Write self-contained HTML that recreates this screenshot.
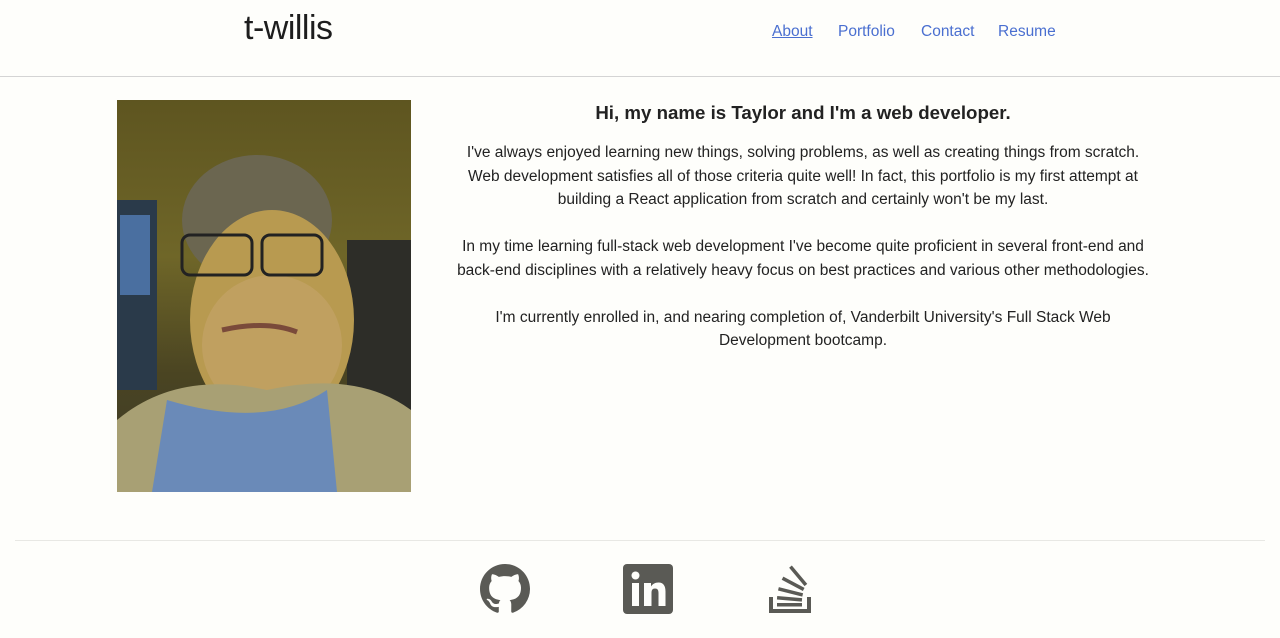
<!DOCTYPE html>
<html><head><meta charset="utf-8"><style>
*{margin:0;padding:0;box-sizing:border-box}
body{width:1280px;height:638px;background:#fefefb;font-family:"Liberation Sans",sans-serif;position:relative;overflow:hidden;color:#222}
.logo{position:absolute;left:244px;top:9px;font-size:34px;color:#1d1d1d;letter-spacing:-0.5px}
nav a{position:absolute;top:23px;font-size:15.5px;color:#4a6fd0;text-decoration:none}
.hr1{position:absolute;left:0;top:76px;width:1280px;border-top:1px solid #d4d4d4}
.hr2{position:absolute;left:15px;top:540px;width:1250px;border-top:1px solid #e8e8e4}
.photo{position:absolute;left:117px;top:100px;width:294px;height:392px;overflow:hidden;background:linear-gradient(180deg,#5e5520 0%,#6f6628 40%,#4a4422 70%,#3b3a2a 100%)}
h1{position:absolute;left:440px;width:726px;top:102px;text-align:center;font-size:18.7px;font-weight:bold;color:#222}
.txt{position:absolute;left:440px;width:726px;top:141px;text-align:center;font-size:15.5px;line-height:23.5px;white-space:nowrap;color:#222}
.txt p{margin-bottom:23.5px}
</style></head><body>
<div class="logo">t-willis</div>
<nav><a style="left:772px;text-decoration:underline">About</a><a style="left:838px">Portfolio</a><a style="left:921px">Contact</a><a style="left:998px">Resume</a></nav>
<div class="hr1"></div>
<div class="photo">
<svg width="294" height="392" viewBox="0 0 294 392">
<rect x="0" y="100" width="40" height="190" fill="#2a3a4a"/>
<rect x="3" y="115" width="30" height="80" fill="#4a6fa0"/>
<rect x="230" y="140" width="64" height="180" fill="#2d2d28"/>
<ellipse cx="140" cy="120" rx="75" ry="65" fill="#6b6650"/>
<ellipse cx="155" cy="220" rx="82" ry="110" fill="#b89a50"/>
<ellipse cx="155" cy="245" rx="70" ry="70" fill="#c0a060"/>
<path d="M0 320 Q60 270 150 290 Q240 270 294 310 L294 392 L0 392Z" fill="#a8a074"/>
<path d="M35 392 L50 300 Q150 330 210 290 L220 392Z" fill="#6a8ab8"/>
<rect x="65" y="135" width="70" height="40" rx="8" fill="none" stroke="#222" stroke-width="3"/>
<rect x="145" y="135" width="60" height="40" rx="8" fill="none" stroke="#222" stroke-width="3"/>
<path d="M105 230 Q150 220 180 232" stroke="#7a4a3a" stroke-width="5" fill="none"/>
</svg>
</div>
<h1>Hi, my name is Taylor and I'm a web developer.</h1>
<div class="txt">
<p>I've always enjoyed learning new things, solving problems, as well as creating things from scratch.<br>Web development satisfies all of those criteria quite well! In fact, this portfolio is my first attempt at<br>building a React application from scratch and certainly won't be my last.</p>
<p>In my time learning full-stack web development I've become quite proficient in several front-end and<br>back-end disciplines with a relatively heavy focus on best practices and various other methodologies.</p>
<p>I'm currently enrolled in, and nearing completion of, Vanderbilt University's Full Stack Web<br>Development bootcamp.</p>
</div>
<div class="hr2"></div>
<svg style="position:absolute;left:480px;top:564px" width="50" height="50" viewBox="0 0 16 16"><path fill="#5a5a55" d="M8 0C3.58 0 0 3.580 0 8c0 3.54 2.29 6.53 5.470 7.59.4.07.55-.17.55-.38 0-.19-.01-.82-.01-1.49-2.01.37-2.53-.49-2.69-.94-.09-.23-.48-.94-.82-1.13-.28-.15-.68-.52-.01-.53.63-.01 1.08.58 1.23.82.72 1.21 1.870.87 2.330.66.07-.52.28-.87.51-1.07-1.78-.2-3.64-.89-3.64-3.95 0-.87.31-1.59.82-2.15-.08-.2-.36-1.02.08-2.12 0 0 .67-.21 2.2.82.64-.18 1.32-.27 2-.27.68 0 1.36.09 2 .27 1.53-1.04 2.2-.82 2.2-.82.44 1.1.16 1.92.08 2.12.51.56.82 1.27.82 2.15 0 3.07-1.87 3.75-3.65 3.95.29.25.54.73.54 1.48 0 1.07-.01 1.93-.01 2.2 0 .21.15.46.55.38A8.013 8.013 0 0016 8c0-4.42-3.58-8-8-8z"/></svg>
<svg style="position:absolute;left:623px;top:564px" width="50" height="50" viewBox="0 0 50 50"><rect width="50" height="50" rx="4" fill="#5a5a55"/><rect x="9" y="19" width="7" height="23" fill="#fefefb"/><circle cx="12.5" cy="11.5" r="4" fill="#fefefb"/><path d="M21 19h7v3.5c1.5-2.5 4-4 7.5-4 5 0 7 3.5 7 9V42h-7V29c0-3-1-4.5-3.5-4.5S28.5 26 28.5 29v13H21z" fill="#fefefb"/></svg>
<svg style="position:absolute;left:768px;top:564px" width="44" height="50" viewBox="0 0 44 50"><path d="M3 33v14h38V33" fill="none" stroke="#5a5a55" stroke-width="4"/><rect x="9" y="39" width="25" height="3.5" fill="#5a5a55"/><rect x="9" y="33" width="25" height="3.5" fill="#5a5a55" transform="rotate(5 21 35)"/><rect x="10" y="26" width="25" height="3.5" fill="#5a5a55" transform="rotate(14 22 28)"/><rect x="13" y="18" width="24" height="3.5" fill="#5a5a55" transform="rotate(28 25 20)"/><rect x="18" y="10" width="24" height="3.5" fill="#5a5a55" transform="rotate(50 30 12)"/></svg>
</body></html>
